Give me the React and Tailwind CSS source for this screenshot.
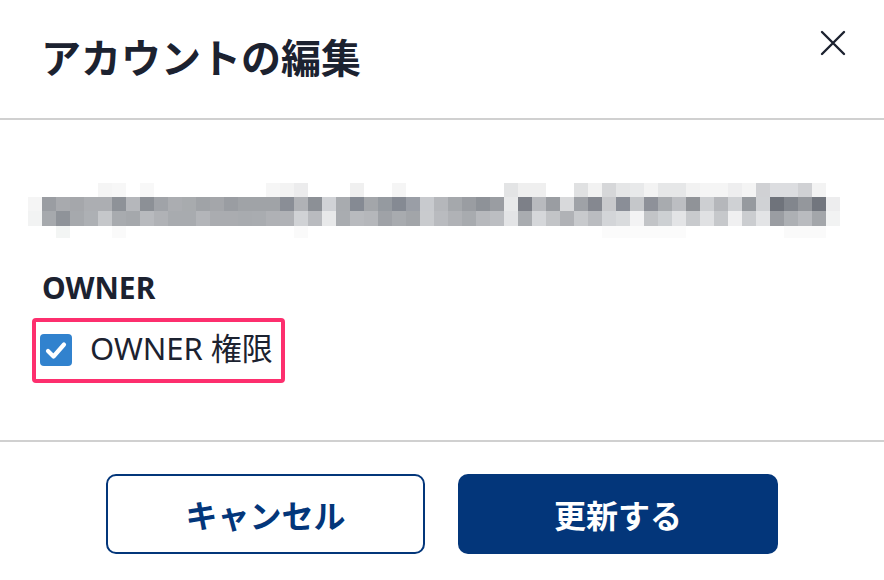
import React from "react";

const ROW2 = ["#f5f5f5","#9a9da2","#a8aaae","#a5a7ab","#acaeb2","#acaeb2","#8e9298","#b5b7bb","#8c9096","#a0a3a8","#abadb1","#a8abae","#a0a3a7","#a4a6aa","#9a9da2","#a0a3a7","#a0a3a7","#a0a3a7","#8a8e96","#b0b2b6","#8c9096","#d0d2d6","#a8abaf","#858a93","#a3a6aa","#959aa0","#858a93","#9a9ea6","#c8cace","#b5b7bb","#a5a8ac","#9a9da2","#8e9298","#9a9da2","#e8e9ea","#7d8088","#b8babe","#9a9da2","#d8d9db","#9fa2a7","#858890","#c8c9cc","#8a8e97","#c5c7ca","#8e9199","#a8abaf","#bcbec2","#909398","#cdcfd2","#b5b7bb","#cfd1d4","#969a9f","#d0d2d5","#6f737b","#82868d","#94979c","#72767e","#ededee"];
const ROW3 = ["#f2f3f3","#a6a9ad","#8f9399","#a6a9ad","#adb0b4","#c5c7ca","#a8abaf","#a5a8ac","#b8babe","#b0b2b6","#a8abaf","#a8abaf","#b3b5b9","#aaacb0","#aaacb0","#a8abaf","#a9acb0","#afb1b5","#b0b2b6","#d0d2d5","#b9bbbf","#e8e9ea","#a9acb0","#b8babe","#b5b7bb","#9fa2a7","#a8abaf","#a2a5a9","#c9cbce","#b9bbbf","#b0b2b6","#a8abaf","#b7b9bd","#bcbec2","#e3e4e6","#a9acb0","#d5d7da","#c2c4c7","#b0b2b6","#c8cacd","#babcc0","#d3d5d8","#d9dbdd","#f3f3f4","#c2c4c7","#cdd0d3","#e3e4e6","#c8cacd","#e0e1e3","#c6c8cb","#f0f0f1","#cbcdd0","#e3e4e6","#9a9da2","#adb0b4","#b9bbbf","#a3a6aa","#f2f3f3"];
const R1 = {5:"#f5f5f5",6:"#f7f7f7",8:"#f8f8f8",17:"#f6f6f6",18:"#f3f3f3",19:"#ececed",23:"#f0f0f0",26:"#f5f5f5",34:"#e3e4e5",35:"#efefef",36:"#efefef",39:"#e0e1e2",40:"#f2f2f2",41:"#d6d7d9",42:"#e5e6e7",43:"#e8e9ea",44:"#f3f3f3",45:"#e6e7e8",46:"#e6e7e8",47:"#f2f2f2",48:"#f5f5f5",49:"#f5f5f5",50:"#eeeeef",51:"#f4f4f4",52:"#d0d1d4",53:"#dcdde0",54:"#dcdde0",55:"#d0d1d4",56:"#f3f3f3"};
const R4 = {2:"#f3f5f4",6:"#fafafa",19:"#fafafa",41:"#fbfbfb",42:"#fbfbfb",43:"#fbfbfb",44:"#fbfbfb",45:"#fbfbfb",46:"#fbfbfb",54:"#fafafa",55:"#fafafa",56:"#fafafa"};
const ROW1 = ROW2.map((_, i) => R1[i] || "#ffffff");
const ROW4 = ROW2.map((_, i) => R4[i] || "#ffffff");
const ROWS = [
  { h: 14, c: ROW1 },
  { h: 14, c: ROW2 },
  { h: 15, c: ROW3 },
  { h: 12, c: ROW4 },
];

const FONT = { fontFamily: '"Noto Sans", "Noto Sans CJK JP", sans-serif' };

export default function App() {
  return (
    <div className="w-[884px] h-[580px] bg-white flex flex-col overflow-hidden text-[#1c2230]" style={FONT}>
      <div className="h-[118px] flex items-start justify-between pl-[41px] pr-[38px] pt-[32px]">
        <h1 className="text-[40px] font-bold leading-[48px] font-['Noto_Sans_CJK_JP',sans-serif]">アカウントの編集</h1>
        <svg width="26" height="26" viewBox="0 0 26 26" className="mt-[-2px]">
          <path d="M2 2 L24 24 M24 2 L2 24" stroke="#1c2230" strokeWidth="2.4" strokeLinecap="round" fill="none" />
        </svg>
      </div>
      <div className="h-[2px] bg-[#d0d0d0]" />
      <div className="h-[320px] flex flex-col pl-[28px]">
        <div className="mt-[63px] flex flex-col">
          {ROWS.map((r, ri) => (
            <div key={ri} className="flex">
              {r.c.map((col, ci) => (
                <div key={ci} className="w-[14px] shrink-0" style={{ height: r.h, backgroundColor: col }} />
              ))}
            </div>
          ))}
        </div>
        <div className="mt-[29px] ml-[14px] text-[30px] font-bold leading-[42px]">OWNER</div>
        <div className="mt-[9px] ml-[4px] w-[253px] h-[65px] border-4 border-[#fd2f6e] rounded-[4px] flex items-center pl-[4px] pb-[2px]">
          <div className="w-[32px] h-[32px] rounded-[4px] bg-[#3182ce] flex items-center justify-center shrink-0">
            <svg width="32" height="32" viewBox="0 0 32 32">
              <path d="M8 17 L13.5 22.5 L24 10.5" stroke="#ffffff" strokeWidth="4.2" strokeLinecap="round" strokeLinejoin="round" fill="none" />
            </svg>
          </div>
          <span className="ml-[18px] text-[31px] leading-[40px] whitespace-nowrap mt-[-3px]">OWNER 権限</span>
        </div>
      </div>
      <div className="h-[2px] bg-[#d0d0d0]" />
      <div className="flex justify-center gap-[33px] pt-[32px]">
        <button className="w-[319px] h-[80px] border-2 border-[#03367a] rounded-[10px] bg-white text-[#03367a] text-[32px] font-bold flex items-center justify-center font-['Noto_Sans_CJK_JP',sans-serif]">キャンセル</button>
        <button className="w-[320px] h-[80px] rounded-[10px] bg-[#03367a] text-white text-[32px] font-bold flex items-center justify-center font-['Noto_Sans_CJK_JP',sans-serif]">更新する</button>
      </div>
    </div>
  );
}
